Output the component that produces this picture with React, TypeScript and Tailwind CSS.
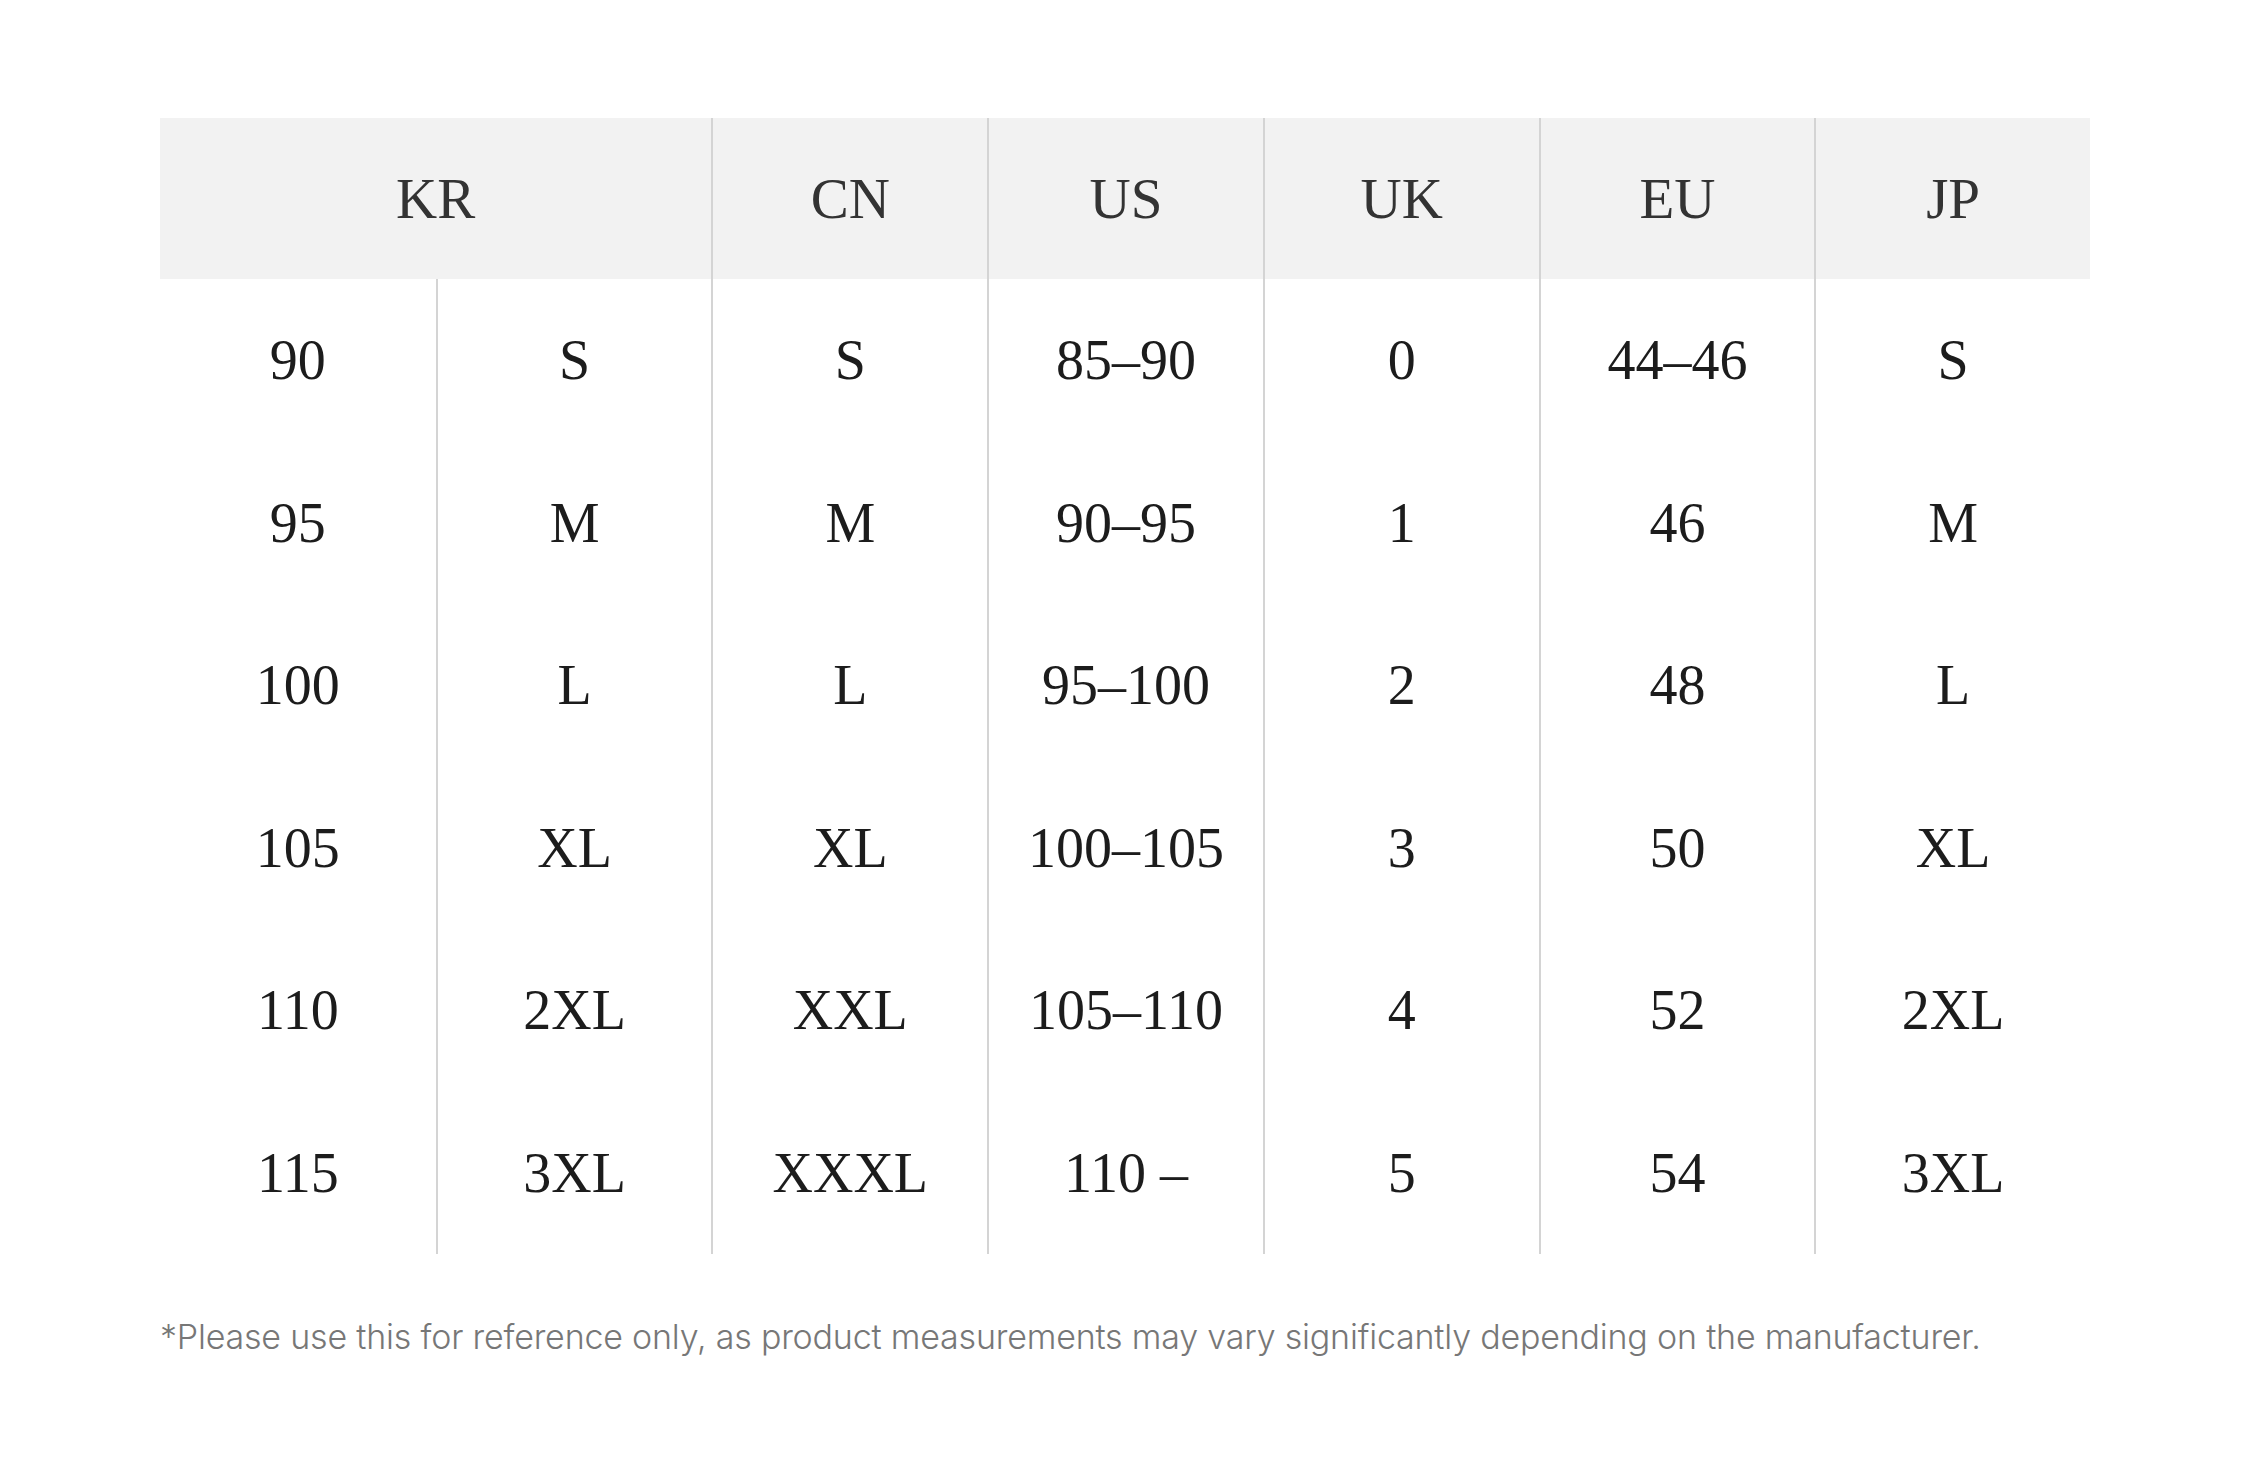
import React from 'react'

const headers = ['CN', 'US', 'UK', 'EU', 'JP']

const rows: string[][] = [
  ['90', 'S', 'S', '85–90', '0', '44–46', 'S'],
  ['95', 'M', 'M', '90–95', '1', '46', 'M'],
  ['100', 'L', 'L', '95–100', '2', '48', 'L'],
  ['105', 'XL', 'XL', '100–105', '3', '50', 'XL'],
  ['110', '2XL', 'XXL', '105–110', '4', '52', '2XL'],
  ['115', '3XL', 'XXXL', '110 –', '5', '54', '3XL'],
]

const App: React.FC = () => {
  return (
    <div className="min-h-screen bg-white pl-[160px] pt-[118px]">
      <div className="w-[1930px] font-['Liberation_Serif',serif]">
        {/* Header row */}
        <div className="grid h-[161px] grid-cols-7 bg-[#f2f2f2] text-[57px] text-[#333]">
          <div className="col-span-2 flex items-center justify-center">KR</div>
          {headers.map((h) => (
            <div
              key={h}
              className="flex items-center justify-center border-l-2 border-[#d4d4d4]"
            >
              {h}
            </div>
          ))}
        </div>

        {/* Body rows */}
        {rows.map((row, i) => (
          <div key={i} className="grid h-[162.5px] grid-cols-7 text-[56px] text-[#1c1c1c]">
            {row.map((cell, j) => (
              <div
                key={j}
                className={
                  j === 0
                    ? 'flex items-center justify-center'
                    : 'flex items-center justify-center border-l-2 border-[#d4d4d4]'
                }
              >
                {cell}
              </div>
            ))}
          </div>
        ))}
      </div>

      <p className="mt-[66px] font-['Inter',sans-serif] text-[34px] font-light leading-none tracking-[-0.2px] text-[#777]">
        *Please use this for reference only, as product measurements may vary significantly depending on the manufacturer.
      </p>
    </div>
  )
}

export default App
